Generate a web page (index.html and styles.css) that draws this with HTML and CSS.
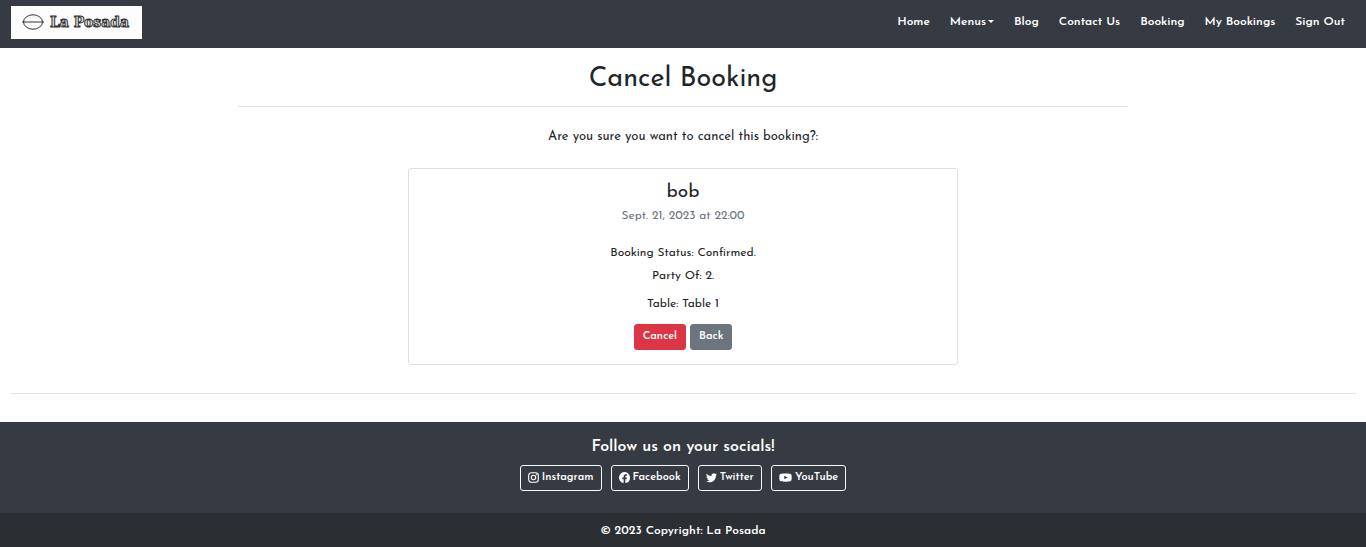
FILE: index.html
```html
<!DOCTYPE html>
<html lang="en">
<head>
<meta charset="utf-8">
<meta name="viewport" content="width=device-width, initial-scale=1">
<title>La Posada - Cancel Booking</title>
<link rel="stylesheet" href="styles.css">
</head>
<body>
<header class="navbar">
  <a class="brand" href="#">
    <svg class="brand-mark" viewBox="0 0 22 16" aria-hidden="true"><ellipse cx="11" cy="8" rx="9.5" ry="7.2"/><path d="M0 8h22"/></svg>
    <span class="brand-name">La Posada</span>
  </a>
  <nav class="nav-links" aria-label="Main">
    <a href="#">Home</a>
    <button class="menu-toggle" type="button" aria-haspopup="true">Menus<span class="caret"></span></button>
    <a href="#">Blog</a>
    <a href="#">Contact Us</a>
    <a href="#">Booking</a>
    <a href="#">My Bookings</a>
    <a href="#">Sign Out</a>
  </nav>
</header>
<main class="content">
  <h1 class="title">Cancel Booking</h1>
  <hr class="rule">
  <p class="question">Are you sure you want to cancel this booking?:</p>
  <section class="card">
    <h2 class="card-name">bob</h2>
    <p class="card-date">Sept. 21, 2023 at 22:00</p>
    <p class="card-line">Booking Status: Confirmed.</p>
    <p class="card-line">Party Of: 2.</p>
    <p class="card-line card-table">Table: Table 1</p>
    <div class="actions">
      <button class="btn btn-danger" type="submit">Cancel</button>
      <a class="btn btn-secondary" href="#">Back</a>
    </div>
  </section>
</main>
<hr class="rule page-rule">
<footer class="footer">
  <div class="socials">
    <h2 class="socials-title">Follow us on your socials!</h2>
    <div class="social-links">
      <a class="btn btn-outline" href="#"><svg class="icon" viewBox="0 0 16 16" aria-hidden="true"><rect x="1" y="1" width="14" height="14" rx="4" fill="none" stroke="currentColor" stroke-width="1.6"/><circle cx="8" cy="8" r="3.2" fill="none" stroke="currentColor" stroke-width="1.6"/><circle cx="12.200" cy="3.800" r="1"/></svg>Instagram</a>
      <a class="btn btn-outline" href="#"><svg class="icon" viewBox="0 0 16 16" aria-hidden="true"><path d="M16 8.05A8 8 0 1 0 6.75 16v-5.62H4.72V8.05h2.03V6.28c0-2.02 1.2-3.13 3.02-3.13.88 0 1.79.16 1.79.16v1.98h-1c-1 0-1.31.62-1.31 1.26v1.5h2.22l-.35 2.33H9.25V16A8 8 0 0 0 16 8.05z"/></svg>Facebook</a>
      <a class="btn btn-outline" href="#"><svg class="icon" viewBox="0 0 16 16" aria-hidden="true"><path d="M5.03 15c6.04 0 9.34-5 9.34-9.33v-.43A6.7 6.7 0 0 0 16 3.54a6.6 6.6 0 0 1-1.89.52 3.3 3.3 0 0 0 1.45-1.82 6.5 6.5 0 0 1-2.09.8A3.29 3.29 0 0 0 7.87 6 9.3 9.3 0 0 1 1.11 2.6a3.29 3.29 0 0 0 1.02 4.38A3.3 3.3 0 0 1 .64 6.6v.04a3.29 3.29 0 0 0 2.63 3.22 3.2 3.2 0 0 1-1.48.06 3.29 3.29 0 0 0 3.07 2.28A6.6 6.6 0 0 1 0 13.56 9.3 9.3 0 0 0 5.03 15"/></svg>Twitter</a>
      <a class="btn btn-outline" href="#"><svg class="icon icon-wide" viewBox="0 0 18 16" aria-hidden="true"><path fill-rule="evenodd" d="M9 2c5 0 7 .2 7.700.9C17.700 3.700 18 5.500 18 8s-.3 4.300-1.300 5.100C16 13.800 14 14 9 14s-7-.2-7.700-.9C.3 12.300 0 10.500 0 8s.3-4.300 1.300-5.100C2 2.200 4 2 9 2zM7.200 5.300v5.400L12 8z"/></svg>YouTube</a>
    </div>
  </div>
  <div class="copyright">© 2023 Copyright: <a href="#">La Posada</a></div>
</footer>
</body>
</html>
```
FILE: styles.css
```css
* { box-sizing: border-box; }
body {
  margin: 0;
  background: #fff;
  color: #212529;
  font: 12px/20px "Josefin Sans", Lato, sans-serif;
}
h1, h2, p { margin: 0; font-weight: 400; }
a { color: inherit; text-decoration: none; }

.navbar {
  display: flex;
  justify-content: space-between;
  align-items: flex-start;
  min-height: 48px;
  padding: 6px 21px 8px 11px;
  background: #363a42;
  color: #fff;
}
.brand {
  display: flex;
  align-items: center;
  gap: 6px;
  padding: 6px 13px 7px 11px;
  background: #fdfdfd;
  color: #222;
}
.brand-mark { width: 22px; height: 16px; fill: none; stroke: #333; }
.brand-name {
  font: bold 14px/20px "DejaVu Serif", serif;
  color: #ddd;
  -webkit-text-stroke: 1px #333;
  white-space: nowrap;
}
.nav-links { display: flex; gap: 20px; padding-top: 6px; font-weight: 600; }
.menu-toggle {
  display: flex;
  align-items: center;
  gap: 2px;
  padding: 0;
  border: 0;
  background: none;
  color: inherit;
  font: inherit;
}
.caret { margin-bottom: 2px; border: 3px solid transparent; border-top-color: #fff; border-bottom: 0; }

.content {
  width: 66%;
  max-width: 890px;
  margin: 0 auto;
  padding-top: 16px;
  text-align: center;
}
.title { font-size: 27px; line-height: 32px; }
.rule { height: 1px; margin: 10px 0 20px; border: 0; background: #e3e3e4; }
.question { font-size: 13px; }
.card {
  max-width: 550px;
  margin: 21px auto 0;
  padding: 14px;
  border: 1px solid #dfdfdf;
  border-radius: 3px;
}
.card-name { font-size: 19px; line-height: 20px; }
.card-date { margin: 3px 0 17px; color: #6c757d; }
.card-line { margin-bottom: 3px; }
.card-table { margin: 8px 0 10px; }
.actions { display: flex; justify-content: center; gap: 4px; }
.btn {
  display: inline-flex;
  align-items: center;
  gap: 3px;
  padding: 2px 8px;
  border: 1px solid;
  border-radius: 3px;
  color: #fff;
  font: 600 11px/20px "Josefin Sans", Lato, sans-serif;
}
.btn-danger { background: #dc3545; border-color: #dc3545; }
.btn-secondary { background: #6c757d; border-color: #6c757d; }
.btn-outline { padding: 2px 7px; border-color: #f8f9fa; }
.page-rule { margin: 28px 10px; }

.footer { background: #363a42; color: #fff; text-align: center; }
.socials { padding: 15px 16px 22px; }
.socials-title { margin-bottom: 8px; font-size: 16px; font-weight: 600; line-height: 20px; }
.social-links { display: flex; flex-wrap: wrap; justify-content: center; gap: 9px; }
.icon { width: 11px; height: 11px; margin-bottom: 2px; fill: currentColor; }
.icon-wide { width: 13px; }
.copyright { padding: 8px 8px 6px; background: #2b2e33; font-weight: 600; }
```
